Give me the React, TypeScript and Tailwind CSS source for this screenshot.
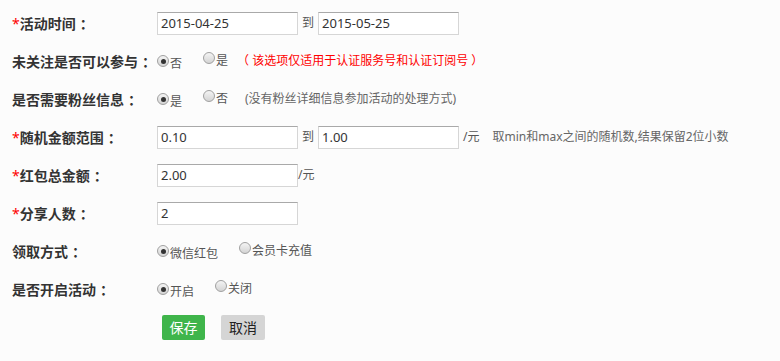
import React from "react";

const font = "font-['Microsoft_YaHei','Noto_Sans','Noto_Sans_CJK_SC',sans-serif]";

function Radio({ checked, label }: { checked?: boolean; label: string }) {
  return (
    <span className="inline-flex items-center">
      <span className="relative top-[-3px] w-[12px] h-[12px] rounded-full border border-[#a0a0a0] bg-gradient-to-b from-[#f4f4f4] to-[#d4d4d4] flex items-center justify-center">
        {checked && <span className="w-[5px] h-[5px] rounded-full bg-[#333]" />}
      </span>
      <span className="text-[12px] text-[#555] ml-px">{label}</span>
    </span>
  );
}

function Input({ value }: { value: string }) {
  return (
    <input
      readOnly
      value={value}
      className="w-[141px] h-[23px] bg-white border border-[#d6d6d6] border-t-[#a9a9a9] px-[3px] text-[13px] text-[#333] outline-none font-['Noto_Sans',sans-serif]"
    />
  );
}

function Label({ star, text }: { star?: boolean; text: string }) {
  return (
    <div className="w-[157px] pl-[12px] shrink-0 whitespace-nowrap text-[14px] font-bold text-[#333]">
      {star && <span className="text-[#f00] font-normal">*</span>}
      {text}
      <span className="ml-[4px]">：</span>
    </div>
  );
}

export default function App() {
  return (
    <div className={`w-[780px] h-[361px] bg-[#fcfcfc] pt-[4px] ${font}`}>
      <div className="flex items-center h-[38px]">
        <Label star text="活动时间" />
        <Input value="2015-04-25" />
        <span className="text-[12px] text-[#555] mx-[4px]">到</span>
        <Input value="2015-05-25" />
      </div>

      <div className="flex items-center h-[38px]">
        <Label text="未关注是否可以参与" />
        <div className="w-[46px]"><Radio checked label="否" /></div>
        <Radio label="是" />
        <span className="ml-[9px] text-[12px] text-[#f00]">（ 该选项仅适用于认证服务号和认证订阅号 ）</span>
      </div>

      <div className="flex items-center h-[38px]">
        <Label text="是否需要粉丝信息" />
        <div className="w-[46px]"><Radio checked label="是" /></div>
        <Radio label="否" />
        <span className="ml-[17px] text-[12px] text-[#666]">(没有粉丝详细信息参加活动的处理方式)</span>
      </div>

      <div className="flex items-center h-[38px]">
        <Label star text="随机金额范围" />
        <Input value="0.10" />
        <span className="text-[12px] text-[#555] mx-[4px]">到</span>
        <Input value="1.00" />
        <span className="text-[12px] text-[#555] ml-[4px]">/元</span>
        <span className="text-[12px] text-[#666] ml-[13px]">取min和max之间的随机数,结果保留2位小数</span>
      </div>

      <div className="flex items-center h-[38px]">
        <Label star text="红包总金额" />
        <Input value="2.00" />
        <span className="text-[12px] text-[#555]">/元</span>
      </div>

      <div className="flex items-center h-[38px]">
        <Label star text="分享人数" />
        <Input value="2" />
      </div>

      <div className="flex items-center h-[38px]">
        <Label text="领取方式" />
        <div className="w-[82px]"><Radio checked label="微信红包" /></div>
        <Radio label="会员卡充值" />
      </div>

      <div className="flex items-center h-[38px]">
        <Label text="是否开启活动" />
        <div className="w-[58px]"><Radio checked label="开启" /></div>
        <Radio label="关闭" />
      </div>

      <div className="flex items-center h-[38px] pl-[162px] gap-[16px]">
        <button className="w-[43px] h-[25px] rounded-[2px] bg-[#3fb54b] text-white text-[14px]">保存</button>
        <button className="w-[44px] h-[25px] rounded-[2px] bg-[#d5d5d5] text-[#222] text-[14px]">取消</button>
      </div>
    </div>
  );
}
